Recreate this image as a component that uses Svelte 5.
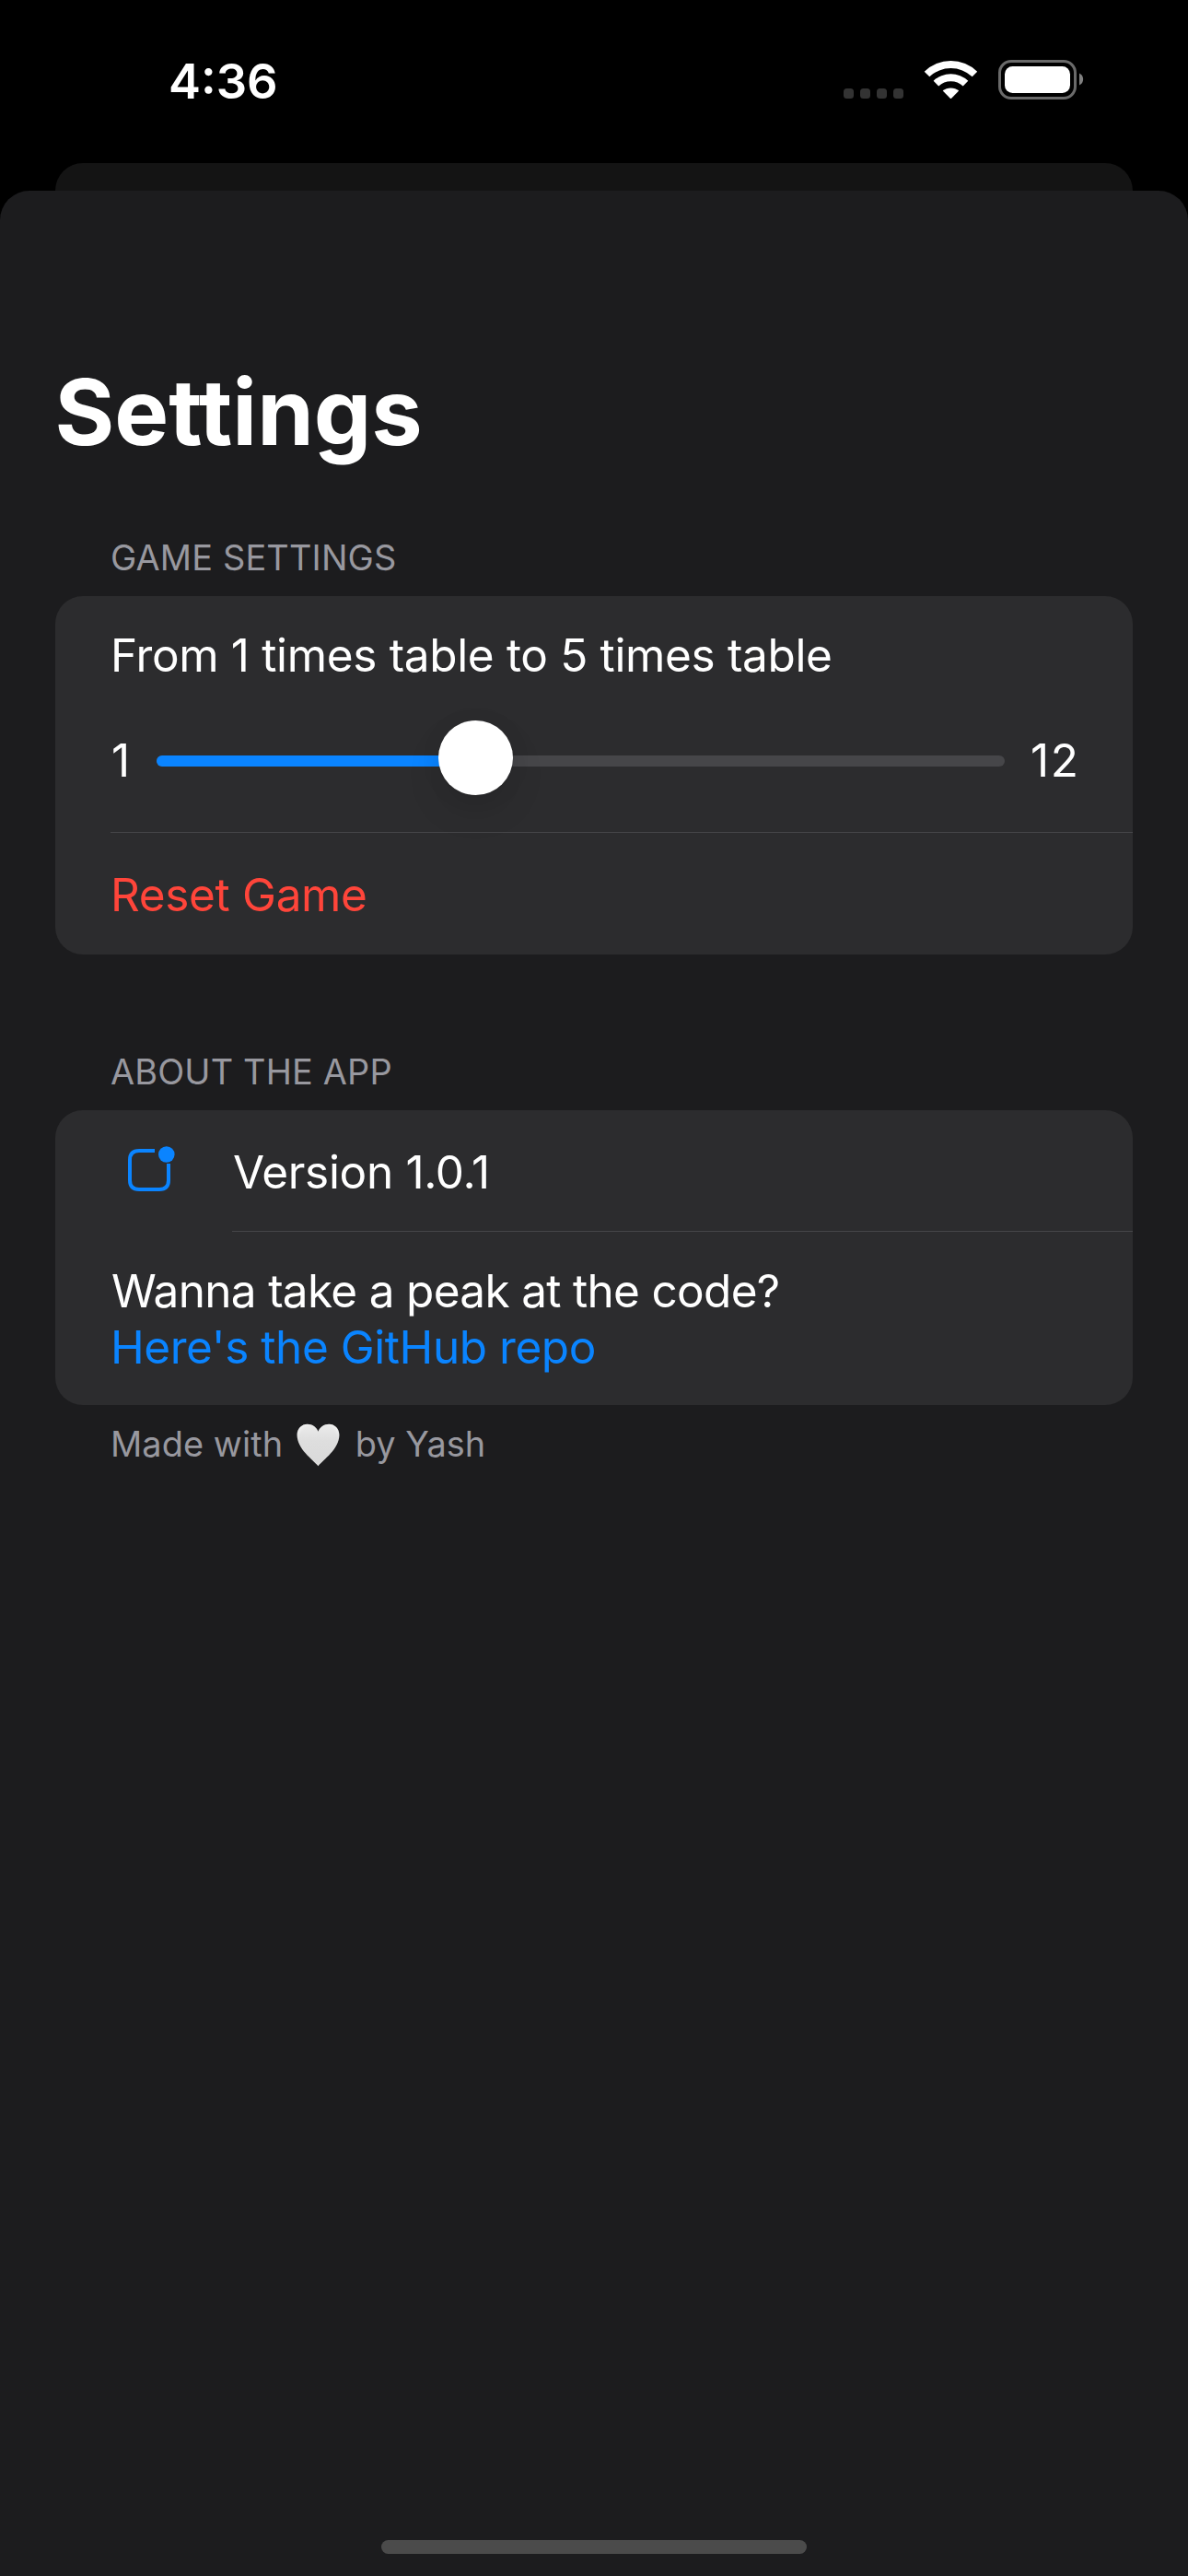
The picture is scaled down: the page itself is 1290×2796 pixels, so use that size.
<script>
  const min = 1;
  const max = 12;
  let value = $state(5);
  // centre of the thumb travels between the track's rounded ends
  const percent = $derived(((value - min) / (max - min)) * 91.2 + 4.43);
</script>

<div class="screen">
  <header class="status">
    <time>4:36</time>
    <div class="indicators">
      <div class="dots"><i></i><i></i><i></i><i></i></div>
      <svg class="wifi" width="59" height="44" viewBox="0 0 59 44" fill="#fff">
        <path d="M0.7 13.7A41 41 0 0 1 58.2 13.7L52.7 19.3A33.8 33.8 0 0 0 6.3 19.3Z" />
        <path d="M10.6 23.7A27.5 27.5 0 0 1 48.3 23.7L42.7 29.5A19.5 19.5 0 0 0 16.2 29.5Z" />
        <path d="M20.7 34.6A13.5 13.5 0 0 1 38.2 34.6L30.1 42.7Q29.45 43.3 28.8 42.7Z" />
      </svg>
      <div class="battery"><div class="charge"></div></div>
      <svg class="nub" width="6" height="14" viewBox="0 0 6 14"><path d="M0 0.5A7.2 7.2 0 0 1 0 13.5Z" fill="#808080" /></svg>
    </div>
  </header>

  <div class="sheet-behind"></div>

  <main class="sheet">
    <h1>Settings</h1>

    <section>
      <h2>GAME SETTINGS</h2>
      <div class="card">
        <div class="row range-row">
          <p class="range-label">From {min} times table to {value} times table</p>
          <div class="slider">
            <span class="one">{min}</span>
            <div class="track">
              <div class="fill" style:width="{percent}%"></div>
              <div class="thumb" style:left="{percent}%"></div>
            </div>
            <span class="twelve">{max}</span>
          </div>
        </div>
        <div class="row reset">Reset Game</div>
      </div>
    </section>

    <section class="about">
      <h2>ABOUT THE APP</h2>
      <div class="card">
        <div class="version">
          <svg width="52" height="50" viewBox="0 0 52 50" fill="none">
            <path d="M30 7H13Q3 7 3 17V39Q3 49 13 49H35Q45 49 45 39V21" stroke="#0a84ff" stroke-width="4" transform="translate(0 -2)" />
            <circle cx="42.8" cy="9" r="8.8" fill="#0a84ff" />
          </svg>
          <div class="row version-label">Version 1.0.1</div>
        </div>
        <div class="row repo">
          <p>Wanna take a peak at the code?</p>
          <p class="link">Here's the GitHub repo</p>
        </div>
      </div>
      <footer>
        <span>Made with</span>
        <svg class="heart" width="47" height="47" viewBox="0 0 47 47">
          <defs>
            <linearGradient id="heartFill" x1="0" y1="0" x2="0" y2="1">
              <stop offset="0" stop-color="#ececec" />
              <stop offset="0.4" stop-color="#dedede" />
              <stop offset="1" stop-color="#d9d9d9" />
            </linearGradient>
            <radialGradient id="heartEdge" cx="0.5" cy="0.45" r="0.62">
              <stop offset="0.75" stop-color="#fff" stop-opacity="0" />
              <stop offset="1" stop-color="#fff" stop-opacity="0.6" />
            </radialGradient>
          </defs>
          <path d="M23.5 46.3C18 39.5 0.6 28 0.6 12.6C0.6 5.5 5.6 0.7 11.8 0.7C17.5 0.7 21.8 4 23.5 8.8C25.2 4 29.5 0.7 35.2 0.7C41.4 0.7 46.4 5.5 46.4 12.6C46.4 28 29 39.5 23.5 46.3Z" fill="url(#heartFill)" />
          <path d="M23.5 46.3C18 39.5 0.6 28 0.6 12.6C0.6 5.5 5.6 0.7 11.8 0.7C17.5 0.7 21.8 4 23.5 8.8C25.2 4 29.5 0.7 35.2 0.7C41.4 0.7 46.4 5.5 46.4 12.6C46.4 28 29 39.5 23.5 46.3Z" fill="url(#heartEdge)" />
        </svg>
        <span>by Yash</span>
      </footer>
    </section>

    <div class="home"></div>
  </main>
</div>

<style>
  :global(body) {
    margin: 0;
    background: #000;
  }
  .screen {
    width: 1290px;
    height: 2796px;
    display: flex;
    flex-direction: column;
    overflow: hidden;
    background: #000;
    color: #fff;
    font-family: Inter, 'Liberation Sans', sans-serif;
    font-size: 49.5px;
    line-height: 60px;
    white-space: nowrap;
  }
  h1, h2, p {
    margin: 0;
  }
  .status {
    box-sizing: border-box;
    height: 177px;
    padding: 58px 112px 0 183px;
    display: flex;
    justify-content: space-between;
    align-items: flex-start;
  }
  time {
    font-size: 52.5px;
    font-weight: 600;
  }
  .indicators {
    display: flex;
    align-items: flex-start;
    padding-top: 6px;
  }
  .dots {
    display: flex;
    gap: 7px;
    padding-top: 32px;
    margin-right: 22px;
  }
  .dots i {
    width: 11px;
    height: 11px;
    border-radius: 3.5px;
    background: #333;
  }
  .battery {
    box-sizing: border-box;
    width: 85px;
    height: 43px;
    margin: 1px 3px 0 22px;
    padding: 4px;
    border: 3px solid #6a6a6a;
    border-radius: 14px;
  }
  .charge {
    height: 29px;
    border-radius: 8.5px;
    background: #fff;
  }
  .nub {
    margin-top: 15px;
  }
  .sheet-behind {
    height: 30px;
    margin: 0 60px;
    border-radius: 30px 30px 0 0;
    background: #141414;
  }
  .sheet {
    box-sizing: border-box;
    flex: 1;
    display: flex;
    flex-direction: column;
    padding: 180px 60px 24px;
    border-radius: 32px 32px 0 0;
    background: #1c1c1e;
  }
  h1 {
    font-size: 99px;
    font-weight: 700;
    line-height: 120px;
    margin-left: -0.5px;
  }
  section {
    margin-top: 75px;
  }
  .about {
    margin-top: 104px;
  }
  h2, footer {
    padding-left: 60px;
    font-size: 37.9px;
    font-weight: 400;
    line-height: 46px;
    letter-spacing: 0.15px;
    color: #98989f;
  }
  .card {
    margin-top: 19px;
    border-radius: 30px;
    background: #2c2c2e;
  }
  .row {
    margin-left: 60px;
    letter-spacing: -0.34px;
  }
  .range-row {
    padding: 34px 60px 48px 0;
    border-bottom: 1px solid #464649;
  }
  .slider {
    display: flex;
    align-items: center;
    margin-top: 54px;
  }
  .one {
    flex: none;
    width: 24px;
    margin-left: 1px;
  }
  .track {
    flex: none;
    position: relative;
    width: 921px;
    height: 12px;
    margin: 2px 28px 0 25px;
    border-radius: 6px;
    background: #464649;
  }
  .fill {
    height: 12px;
    border-radius: 6px;
    background: #0a84ff;
  }
  .thumb {
    position: absolute;
    top: -38px;
    width: 81px;
    height: 81px;
    margin-left: -40.5px;
    border-radius: 50%;
    background: #fff;
    box-shadow: 0 18px 40px rgba(0, 0, 0, 0.09), 0 2px 24px rgba(0, 0, 0, 0.06);
  }
  .twelve {
    letter-spacing: 1.6px;
  }
  .reset {
    padding: 37px 0 35px;
    color: #ff453a;
  }
  .version {
    display: flex;
    align-items: flex-start;
  }
  .version svg {
    flex: none;
    margin: 39px 0 0 78px;
  }
  .version-label {
    flex: 1;
    margin-left: 62px;
    padding: 37px 0 34px 1px;
    border-bottom: 1px solid #464649;
  }
  .repo {
    padding: 33.5px 0 32.5px;
    line-height: 61px;
    letter-spacing: -0.69px;
  }
  .repo p {
    padding-left: 1px;
  }
  .repo .link {
    padding-left: 0;
    letter-spacing: -0.45px;
    color: #0a84ff;
  }
  footer {
    display: flex;
    margin-top: 19px;
    letter-spacing: 0.08px;
  }
  .heart {
    margin: 1px 17px 0 14.5px;
  }
  .home {
    width: 462px;
    height: 15px;
    margin: auto auto 0;
    border-radius: 8px;
    background: #4b4b4b;
  }
</style>
